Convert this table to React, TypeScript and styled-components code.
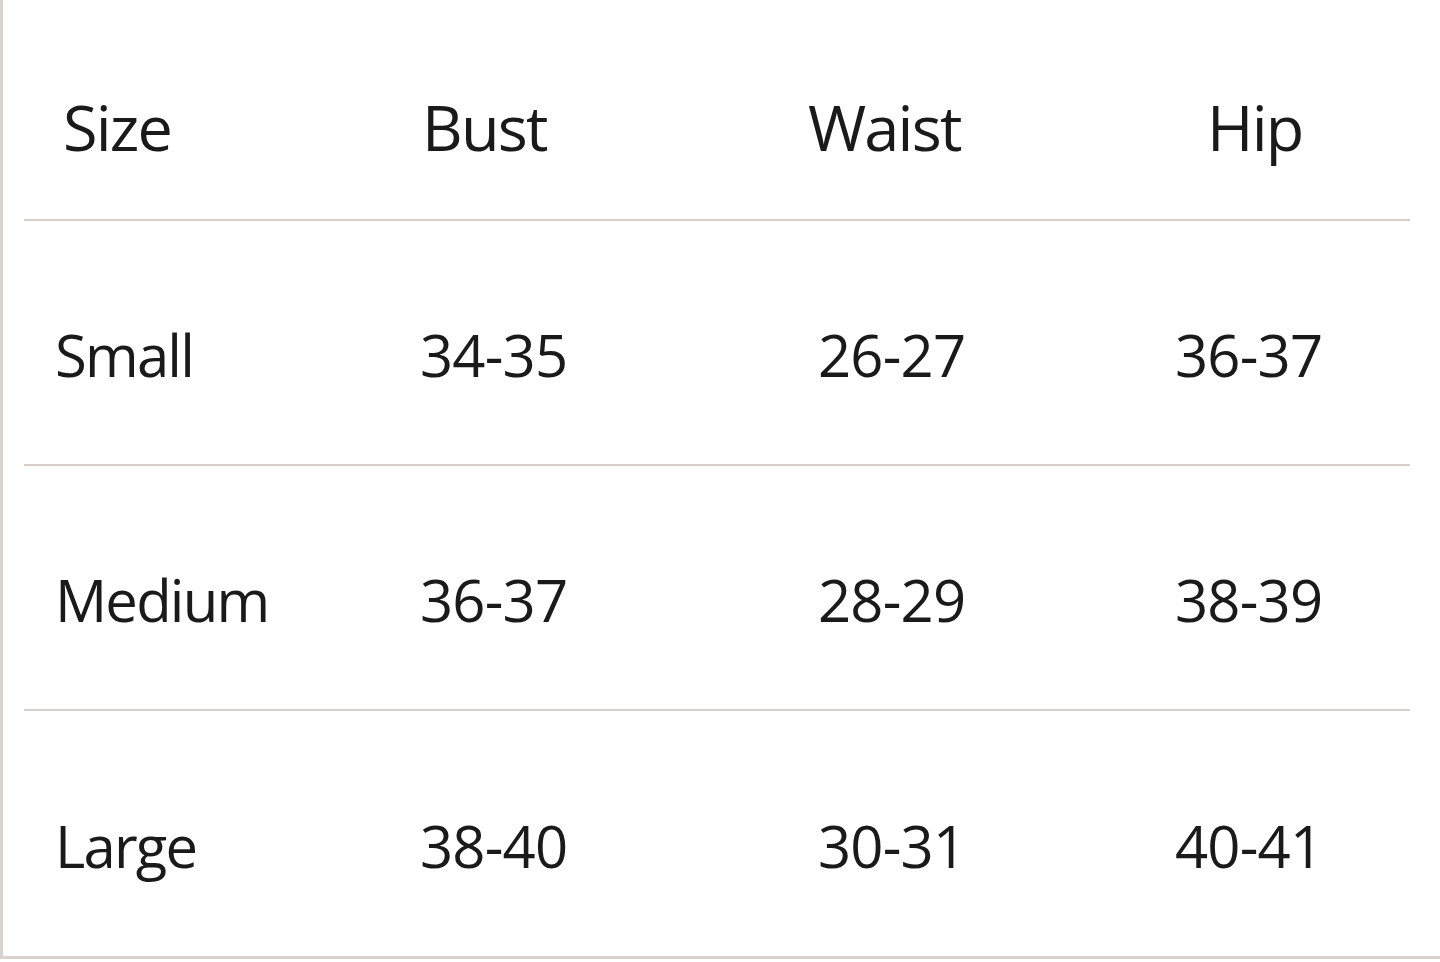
import React from 'react';
import styled, { createGlobalStyle } from 'styled-components';

const GlobalStyle = createGlobalStyle`
  html, body {
    margin: 0;
    padding: 0;
    background: #ffffff;
  }
  body {
    font-family: 'Open Sans', 'Noto Sans', sans-serif;
    color: #1a1a1a;
  }
`;

const rows = [
  { size: 'Small', bust: '34-35', waist: '26-27', hip: '36-37' },
  { size: 'Medium', bust: '36-37', waist: '28-29', hip: '38-39' },
  { size: 'Large', bust: '38-40', waist: '30-31', hip: '40-41' },
];

export default function App() {
  return (
    <>
      <GlobalStyle />
      <ChartFrame>
        <Row header>
          <Cell header>Size</Cell>
          <Cell header>Bust</Cell>
          <Cell header>Waist</Cell>
          <Cell header>Hip</Cell>
        </Row>
        {rows.map((r) => (
          <Row key={r.size}>
            <Cell word>{r.size}</Cell>
            <Cell>{r.bust}</Cell>
            <Cell>{r.waist}</Cell>
            <Cell>{r.hip}</Cell>
          </Row>
        ))}
      </ChartFrame>
    </>
  );
}

const ChartFrame = styled.div`
  height: 959px;
  box-sizing: border-box;
  border-left: 3px solid #d9d1cd;
  border-bottom: 3px solid #d9d1cd;
  padding-left: 21px;
  display: flex;
  flex-direction: column;
`;

const Row = styled.div<{ header?: boolean }>`
  width: 1386px;
  height: ${(p) => (p.header ? '222px' : '246px')};
  box-sizing: border-box;
  padding-top: ${(p) => (p.header ? '33px' : '25px')};
  padding-left: ${(p) => (p.header ? '39px' : '31px')};
  display: grid;
  grid-template-columns: ${(p) =>
    p.header ? '359px 386px 399px 1fr' : '365px 398px 357px 1fr'};
  align-items: center;
  border-bottom: 2px solid #d8cfcb;
  &:last-child {
    border-bottom: none;
  }
`;

const Cell = styled.div<{ header?: boolean; word?: boolean }>`
  font-size: ${(p) => (p.header ? '63px' : '58px')};
  font-weight: 500;
  letter-spacing: ${(p) => (p.header || p.word ? '-1.8px' : '-0.8px')};
  line-height: 1;
  white-space: nowrap;
`;
